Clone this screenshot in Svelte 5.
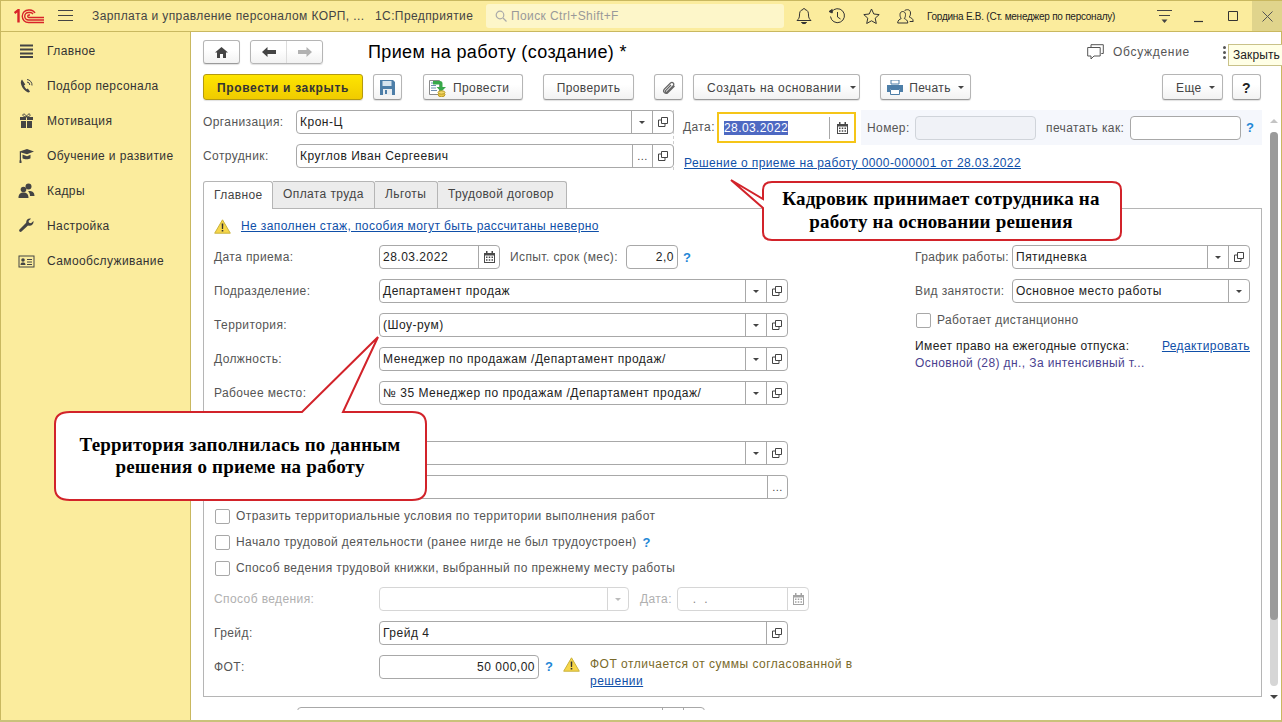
<script>
  const menu = [
    ['Главное', 'list'], ['Подбор персонала', 'phone'], ['Мотивация', 'gift'],
    ['Обучение и развитие', 'cap'], ['Кадры', 'people'], ['Настройка', 'wrench'], ['Самообслуживание', 'card']
  ];
  const tabs = ['Главное', 'Оплата труда', 'Льготы', 'Трудовой договор'];
</script>

{#snippet copyIcon()}
  <svg class="ic" width="12" height="12" viewBox="0 0 12 12"><path d="M4.500 1.500h6v6h-6z M4 4H1.500v6.500H8V8" fill="none" stroke="#444" stroke-width="1"/></svg>
{/snippet}
{#snippet calIcon()}
  <svg class="ic" width="11" height="12" viewBox="0 0 11 12"><path d="M0 2h11v10H0z" fill="#4a4a4a"/><path d="M2 0h1.500v3H2zM7.500 0H9v3H7.500z" fill="#4a4a4a"/><path d="M1 4.500h9V11H1z" fill="#fff"/><path d="M2 5.500h1.500v1.500H2zM4.750 5.500h1.500v1.500h-1.500zM7.500 5.500H9v1.500H7.500zM2 8.300h1.500v1.500H2zM4.750 8.300h1.500v1.500h-1.500zM7.500 8.300H9v1.500H7.500z" fill="#4a4a4a"/></svg>
{/snippet}
{#snippet warnIcon()}
  <svg width="17" height="15" viewBox="0 0 17 15"><path d="M8.500 .8 16.300 14.200H.7z" fill="#f6d64a" stroke="#c9b23a" stroke-width="1" stroke-linejoin="round"/><path d="M7.700 4.500h1.600l-.2 5.500H7.900zM7.700 11h1.600v1.600H7.700z" fill="#333"/></svg>
{/snippet}
{#snippet field(value, cls, pick, open, dots)}
  <div class="field {cls}">
    <span class="val">{value}</span>
    {#if pick}<span class="fbtn"><i class="tri"></i></span>{/if}
    {#if dots}<span class="fbtn dots">...</span>{/if}
    {#if open}<span class="fbtn open">{@render copyIcon()}</span>{/if}
  </div>
{/snippet}

<div class="app">
  <header class="top">
    <svg class="logo" width="30" height="15" viewBox="0 0 30 15" fill="none" stroke="#d8232a" stroke-width="1.400">
      <path d="M.5 4 4.500 1V13.500" stroke-width="2.400"/>
      <path d="M30 13.500H14.500a6 6 0 0 1 0-12.500H16a6 6 0 0 1 5 3"/>
      <path d="M30 11H14.500a3.500 3.500 0 0 1 0-7.500H16a3.500 3.500 0 0 1 3 1.500"/>
      <path d="M30 8.500H15a1 1 0 0 1 0-2.500h1"/>
    </svg>
    <svg class="burger" width="15" height="12" viewBox="0 0 15 12"><path d="M0 .5h15M0 5.500h15M0 10.500h15" stroke="#444"/></svg>
    <span class="app-title">Зарплата и управление персоналом КОРП, ...</span>
    <span class="app-name">1С:Предприятие</span>
    <div class="search">
      <svg width="12" height="12" viewBox="0 0 12 12" fill="none" stroke="#aaa" stroke-width="1.200"><circle cx="5" cy="5" r="3.800"/><path d="m8 8 3.500 3.500"/></svg>
      <span>Поиск Ctrl+Shift+F</span>
    </div>
    <svg class="t-ic bell" width="16" height="18" viewBox="0 0 16 18" fill="none" stroke="#333"><path d="M8 1.500a1 1 0 0 1 1 1c3 .7 3.500 3 3.500 5.500 0 3 1 4 2.500 5.500H1C2.500 12 3.500 11 3.500 8c0-2.500.5-4.800 3.500-5.500a1 1 0 0 1 1-1z"/><path d="M5.500 15.500h5c-.5 1.500-4.500 1.500-5 0z" fill="#333"/></svg>
    <svg class="t-ic hist" width="17" height="17" viewBox="0 0 17 17" fill="none" stroke="#333"><path d="M2.500 4A7 7 0 1 1 1.500 8.500"/><path d="M0 3.500 3.200 1.500V5z" fill="#333"/><path d="M8.500 4v5l3 2"/></svg>
    <svg class="t-ic star" width="17" height="16" viewBox="0 0 17 16" fill="none" stroke="#333"><path d="m8.500 1 2.300 5 5.400.6-4 3.600 1.100 5.300-4.800-2.700-4.800 2.700 1.100-5.300-4-3.600L6.200 6z"/></svg>
    <svg class="t-ic users" width="17" height="15" viewBox="0 0 17 15" fill="none" stroke="#333"><path d="M.7 14c0-3 2-3.500 3.500-4.500C3 8 3 6.500 3 5.500 3 3.500 4.300 2.500 5.700 2.500S8.500 3.500 8.500 5.500c0 1 0 2.500-1.200 4 1.500 1 3.500 1.500 3.500 4.500z"/><path d="M7.500 2C8 1 9.200.7 10.500.7c1.800 0 3 1.200 3 3.300 0 1.500-.3 3-1.300 4 1.500.8 4 1.200 4 4.500h-3.500"/></svg>
    <span class="user">Гордина Е.В. (Ст. менеджер по персоналу)</span>
    <svg class="t-ic more" width="15" height="13" viewBox="0 0 15 13"><path d="M0 .5h15M2 5.500h11" stroke="#444"/><path d="m4.500 9.500h6L7.500 13z" fill="#444"/></svg>
    <svg class="t-ic minw" width="9" height="3" viewBox="0 0 9 3"><path d="M0 1.500h9" stroke="#333" stroke-width="1.200"/></svg>
    <svg class="t-ic maxw" width="10" height="10" viewBox="0 0 10 10"><path d="M.5.500h9v9h-9z" fill="none" stroke="#333"/></svg>
    <div class="closew"><svg width="11" height="11" viewBox="0 0 11 11"><path d="m.5.500 10 10m0-10-10 10" stroke="#555"/></svg></div>
  </header>

  <div class="body">
    <nav class="side">
      {#each menu as [label, icon]}
        <div class="mi">
          <svg class="mi-ic" width="17" height="16" viewBox="0 0 17 16" fill="#444">
            {#if icon === 'list'}
              <path d="M2 1.500h13v2H2zM2 5.500h13v2H2zM2 9.500h13v2H2zM2 13h13v2H2z" />
            {:else if icon === 'phone'}
              <path d="M4 1.500C2.500 3 2.500 5 3.500 7.500 4.700 10.500 7 13 9.500 14.300c1 .4 1.700 0 2.500-.8L9.800 10.500l-1.300.8C7.300 10 6.500 8.800 6 7.400l1.300-1z" /><path d="M9 1.500a5.500 5.500 0 0 1 5 6M9 4a3 3 0 0 1 2.800 3" fill="none" stroke="#444" />
            {:else if icon === 'gift'}
              <path d="M2 4h6v3H2zM9 4h6v3H9zM3 8h5v7H3zM9 8h5v7H9z" /><path d="M8.500 4C6 4 4.500 3 5 1.500 5.700.2 8 1.500 8.500 4 9 1.500 11.300.2 12 1.500 12.500 3 11 4 8.500 4z" fill="none" stroke="#444" />
            {:else if icon === 'cap'}
              <path d="M1.500 3.500 9 1l7 2.500-7 2.800L3 4.500V13H1.800V3.800z" /><path d="M4.500 6.500 9 8.200l3.500-1.500v3.500c-2 1.500-6 1.500-8 0zM1.500 12.500h2V15h-2z" />
            {:else if icon === 'people'}
              <circle cx="10.500" cy="3.500" r="3" /><circle cx="5.500" cy="6.500" r="2.800" /><path d="M.5 15c0-4 2-5.500 5-5.500s5 1.500 5 5.500zM11 8c3 0 5.500 1 5.500 5H12c0-2-.5-3.500-2-4.500z" />
            {:else if icon === 'wrench'}
              <path d="M15.500 3 13 5.300 11 4.800 10.500 3 13 .7c-2.500-.8-5 1-4.800 4L1.500 11.500c-1.200 1.300.7 3.300 2 2L10 7.500c3.500 1 6-1.500 5.500-4.500z" />
            {:else}
              <path d="M.5 2.500h16v12H.5z M1.500 3.500v10h14v-10z" fill-rule="evenodd" /><circle cx="5" cy="7" r="1.800" /><path d="M2.500 12c0-2 1-2.500 2.500-2.500s2.500.5 2.500 2.500zM9 6h5v1H9zM9 8.500h5v1H9zM9 11h5v1H9z" />
            {/if}
          </svg>
          <span>{label}</span>
        </div>
      {/each}
    </nav>

    <main class="main">
      <div class="r-title">
        <button class="btn home"><svg width="13" height="11" viewBox="0 0 13 11" fill="#444"><path d="M6.500 0 13 5.500h-2V11H8V7H5v4H2V5.500H0z"/></svg></button>
        <div class="navgrp">
          <span class="nb"><svg width="14" height="10" viewBox="0 0 14 10" fill="#444"><path d="M5.500 0v3H14v4H5.500v3L0 5z"/></svg></span>
          <span class="nb"><svg width="14" height="10" viewBox="0 0 14 10" fill="#b2b2b2"><path d="M8.500 0v3H0v4h8.500v3L14 5z"/></svg></span>
        </div>
        <h1>Прием на работу (создание) *</h1>
        <svg class="chat" width="17" height="16" viewBox="0 0 17 16" fill="none" stroke="#555"><path d="M4 3V.7h12.300V9.500h-2"/><path d="M.7 3.500h12.500v8.500H7L4 15v-3H.7z" fill="#fff"/></svg>
        <span class="disc">Обсуждение</span>
        <span class="vdots"><i></i><i></i><i></i></span>
      </div>

      <div class="r-tools">
        <button class="btn primary">Провести и закрыть</button>
        <button class="btn b-save"><svg width="15" height="15" viewBox="0 0 15 15"><path d="M0 0h13l2 2v13H0z" fill="#4d7ea8"/><path d="M2.500 1h9v5h-9z" fill="#d7e4ee"/><path d="M3 9h9v6H3z" fill="#e8edf1"/><path d="M5 10h2v4H5z" fill="#4d7ea8"/></svg></button>
        <button class="btn b-post"><svg width="17" height="18" viewBox="0 0 17 18"><path d="M.5 1.500h10v14H.5z" fill="#fff" stroke="#8a8a8a"/><path d="M2 4h6M2 6.500h5M2 9h5M2 11.500h6" stroke="#6f8fb0"/><path d="M4 2h7a2.500 2.500 0 0 1 2.500 2.500V8H17l-4.800 4.800L7.500 8H11V5.500H4z" fill="#38a84a"/><ellipse cx="12.500" cy="15.500" rx="3.500" ry="2.300" fill="#ecc94a" stroke="#b99a2a"/><ellipse cx="12.500" cy="13.500" rx="3.500" ry="1.700" fill="#f4d968" stroke="#b99a2a"/></svg>Провести</button>
        <button class="btn b-check">Проверить</button>
        <button class="btn b-clip"><svg width="14" height="14" viewBox="0 0 14 14" fill="none" stroke="#666" stroke-width="1.200"><path d="M12.500 5 6 11.500c-2.500 2.500-6-1-3.500-3.500l6-6c2-1.700 4.300.7 2.700 2.700L5 11c-1 .8-2.200-.4-1.400-1.400L9 4"/></svg></button>
        <button class="btn b-create">Создать на основании<i class="tri"></i></button>
        <button class="btn b-print"><svg width="16" height="15" viewBox="0 0 16 15"><path d="M4 0h8v4H4z" fill="#fff" stroke="#4d7ea8"/><path d="M0 5h16v7h-3V9H3v3H0z" fill="#4d7ea8"/><path d="M3.500 9.500h9v5h-9z" fill="#fff" stroke="#4d7ea8"/></svg>Печать<i class="tri"></i></button>
        <span class="grow"></span>
        <button class="btn b-more">Еще<i class="tri"></i></button>
        <button class="btn b-help">?</button>
      </div>

      <div class="head">
        <div class="head-l">
          <div class="row"><label>Организация:</label>{@render field('Крон-Ц', 'w-org', true, true, false)}</div>
          <div class="row"><label>Сотрудник:</label>{@render field('Круглов Иван Сергеевич', 'w-org', false, true, true)}</div>
        </div>
        <div class="head-r">
          <div class="head-top">
            <label class="dl">Дата:</label>
            <div class="datef"><span class="sel">28.03.2022</span><span class="fbtn open">{@render calIcon()}</span></div>
            <div class="nopanel">
              <label>Номер:</label>
              <div class="field w-num disabled"></div>
              <label class="pk">печатать как:</label>
              <div class="field w-pk"></div>
              <span class="q">?</span>
            </div>
          </div>
          <a class="lnk decision">Решение о приеме на работу 0000-000001 от 28.03.2022</a>
        </div>
      </div>

      <div class="tabs">
        {#each tabs as t, i}<span class="tab" class:on={i === 0}>{t}</span>{/each}
      </div>
      <section class="panel">
        <div class="warn">{@render warnIcon()}<a class="lnk">Не заполнен стаж, пособия могут быть рассчитаны неверно</a></div>
        <div class="cols">
          <div class="col-l">
            <div class="frow">
              <label>Дата приема:</label>
              <div class="field w-date"><span class="val">28.03.2022</span><span class="fbtn open">{@render calIcon()}</span></div>
              <label class="trial">Испыт. срок (мес):</label>
              <div class="field w-trial"><span class="val right">2,0</span></div>
              <span class="q">?</span>
            </div>
            <div class="frow"><label>Подразделение:</label>{@render field('Департамент продаж', 'w-main', true, true, false)}</div>
            <div class="frow"><label>Территория:</label>{@render field('(Шоу-рум)', 'w-main', true, true, false)}</div>
            <div class="frow"><label>Должность:</label>{@render field('Менеджер по продажам /Департамент продаж/', 'w-main', true, true, false)}</div>
            <div class="frow"><label>Рабочее место:</label>{@render field('№ 35 Менеджер по продажам /Департамент продаж/', 'w-main', true, true, false)}</div>
            <div class="frow gap-t"><label></label>{@render field('', 'w-main', true, true, false)}</div>
            <div class="frow"><label></label>{@render field('', 'w-main', false, false, true)}</div>
            <div class="chk c1"><i class="box"></i>Отразить территориальные условия по территории выполнения работ</div>
            <div class="chk"><i class="box"></i>Начало трудовой деятельности (ранее нигде не был трудоустроен)<span class="q q2">?</span></div>
            <div class="chk"><i class="box"></i>Способ ведения трудовой книжки, выбранный по прежнему месту работы</div>
            <div class="frow dis r-way">
              <label>Способ ведения:</label>
              <div class="field w-way disabled2"><span class="val"></span><span class="fbtn"><i class="tri"></i></span></div>
              <label class="wd">Дата:</label>
              <div class="field w-wd disabled2"><span class="val">&nbsp;&nbsp;.&nbsp;&nbsp;.</span><span class="fbtn open">{@render calIcon()}</span></div>
            </div>
            <div class="frow"><label>Грейд:</label>{@render field('Грейд 4', 'w-main', false, true, false)}</div>
            <div class="frow fot">
              <label>ФОТ:</label>
              <div class="field w-fot"><span class="val right">50 000,00</span></div>
              <span class="q q3">?</span>
              {@render warnIcon()}
              <p class="fotmsg">ФОТ отличается от суммы согласованной в <a class="lnk">решении</a></p>
            </div>
          </div>
          <div class="col-r">
            <div class="frow"><label class="rl">График работы:</label>{@render field('Пятидневка', 'w-right', true, true, false)}</div>
            <div class="frow"><label class="rl">Вид занятости:</label>{@render field('Основное место работы', 'w-right', true, false, false)}</div>
            <div class="chk c-r"><i class="box"></i>Работает дистанционно</div>
            <div class="vac">
              <div class="vac-h"><span>Имеет право на ежегодные отпуска:</span><a class="lnk">Редактировать</a></div>
              <div class="vac-v">Основной (28) дн., За интенсивный т...</div>
            </div>
          </div>
        </div>
      </section>
      <div class="clipped"><div class="clip-f"><i></i><i></i></div></div>
    </main>

    <div class="sbar"><i class="arr"></i><div class="track"><i class="thumb"></i></div><i class="arr dn"></i></div>
  </div>

  <div class="tip">Закрыть</div>

  <svg class="callouts" width="1282" height="722" viewBox="0 0 1282 722">
    <path class="co" d="M731 180 763 199V190Q763 182 772 182H1112Q1121 182 1121 190V232Q1121 240 1112 240H772Q763 240 763 232V208z"/>
    <path class="co" d="M378 337 302 412H70Q55 412 55 424V488Q55 500 70 500H412Q426 500 426 488V424Q426 412 412 412H343z"/>
    <text class="ct" x="941" y="205">Кадровик принимает сотрудника на</text>
    <text class="ct" x="941" y="228">работу на основании решения</text>
    <text class="ct" x="240" y="451">Территория заполнилась по данным</text>
    <text class="ct" x="240" y="473">решения о приеме на работу</text>
  </svg>
</div>

<style>
  :global(body) { margin: 0; background: #fff; }
  .app { position: relative; width: 1282px; height: 722px; overflow: hidden; font: 12px "Liberation Sans", Arial, sans-serif; letter-spacing: .4px; color: #333; display: flex; flex-direction: column; }
  .top { flex: none; background: #fbec9d; border-top: 1px solid #c9b860; border-bottom: 1px solid #c9b860; border-left: 1px solid #c9b860; display: flex; align-items: center; height: 30px; }
  .logo { margin-left: 13px; flex: none; }
  .burger { margin-left: 14px; flex: none; }
  .app-title { margin-left: 19px; width: 283px; white-space: nowrap; color: #444; flex: none; }
  .app-name { color: #444; width: 111px; flex: none; white-space: nowrap; }
  .search { width: 298px; height: 24px; background: #fdf6c9; border-radius: 3px; display: flex; align-items: center; gap: 4px; padding-left: 9px; box-sizing: border-box; color: #999; flex: none; }
  .t-ic { flex: none; }
  .bell { margin-left: 12px; }
  .hist { margin-left: 17px; }
  .star { margin-left: 17px; }
  .users { margin-left: 17px; }
  .user { margin-left: 13px; width: 225px; font-size: 10px; letter-spacing: -.25px; white-space: nowrap; color: #222; flex: none; }
  .more { margin-left: 5px; }
  .minw { margin-left: 22px; margin-top: 10px; }
  .maxw { margin-left: 25px; }
  .closew { margin-left: 14px; width: 31px; height: 30px; background: #e0d48c; display: flex; align-items: center; justify-content: center; flex: none; }

  .body { flex: 1; display: flex; min-height: 0; border-bottom: 2px solid #c9c27a; border-right: 1px solid #c9b860; }
  .side { flex: none; background: #fbec9d; border-left: 1px solid #c9b860; border-right: 1px solid #c9b860; padding-top: 1px; width: 189px; }
  .mi { height: 35px; display: flex; align-items: center; padding-left: 17px; color: #333; }
  .mi-ic { flex: none; margin-right: 12px; }

  .main { flex: 1; min-width: 0; padding: 8px 0 0 12px; overflow: hidden; }
  .sbar { width: 19px; flex: none; display: flex; flex-direction: column; align-items: flex-start; padding: 87px 0 0 8px; box-sizing: border-box; }
  .arr { width: 0; height: 0; border: 4px solid transparent; border-bottom: 4px solid #c4c4c4; border-top: 0; margin-bottom: 9px; }
  .arr.dn { border-bottom: 0; border-top: 4px solid #444; margin: 9px 0 0; }
  .track { width: 8px; height: 554px; border-radius: 4px; background: #d6d6d6; flex: none; }
  .thumb { display: block; width: 8px; height: 488px; border-radius: 4px; background: #9a9a9a; }

  button { font: inherit; letter-spacing: inherit; }
  .btn { height: 24px; box-sizing: border-box; border: 1px solid #b5b5b5; border-bottom-color: #9a9a9a; border-radius: 3px; background: linear-gradient(#fff 40%, #f2f2f2); color: #444; display: inline-flex; align-items: center; justify-content: center; padding: 0; flex: none; box-shadow: 0 1px 1px rgba(0,0,0,.12); }
  .tri { display: inline-block; width: 0; height: 0; border: 3px solid transparent; border-top: 3px solid #444; border-bottom: 0; margin-left: 7px; }

  .r-title { height: 24px; display: flex; align-items: center; }
  .home { width: 37px; }
  .navgrp { margin-left: 10px; width: 73px; height: 24px; box-sizing: border-box; border: 1px solid #b5b5b5; border-radius: 3px; display: flex; background: linear-gradient(#fff 40%, #f2f2f2); box-shadow: 0 1px 1px rgba(0,0,0,.12); flex: none; }
  .nb { flex: 1; display: flex; align-items: center; justify-content: center; }
  .nb + .nb { border-left: 1px solid #ddd; }
  h1 { margin: 0 0 0 45px; font: 400 18px "Liberation Sans", Arial, sans-serif; letter-spacing: .35px; color: #000; width: 720px; white-space: nowrap; flex: none; }
  .chat { margin-left: -1px; flex: none; }
  .disc { margin-left: 9px; color: #555; width: 110px; flex: none; letter-spacing: .7px; }
  .vdots { display: flex; flex-direction: column; gap: 2px; }
  .vdots i { width: 3px; height: 3px; border-radius: 50%; background: #555; }

  .r-tools { margin-top: 10px; height: 26px; display: flex; align-items: stretch; padding-right: 1px; }
  .r-tools .btn { height: 26px; padding-top: 1px; }
  .primary { width: 160px; background: linear-gradient(#fee500, #f0cb00); border-color: #b49a10; font-weight: 700; color: #333; letter-spacing: .65px; }
  .b-save { width: 29px; margin-left: 10px; }
  .b-post { width: 100px; margin-left: 21px; gap: 7px; justify-content: flex-start; padding-left: 5px; }
  .b-check { width: 91px; margin-left: 20px; }
  .b-clip { width: 29px; margin-left: 20px; }
  .b-create { width: 167px; margin-left: 10px; justify-content: flex-start; padding-left: 13px; letter-spacing: .5px; }
  .b-create .tri { margin-left: 8px; }
  .b-print { width: 91px; margin-left: 20px; gap: 6px; }
  .b-print .tri { margin-left: 1px; }
  .grow { flex: 1; }
  .b-more { width: 61px; justify-content: flex-start; padding-left: 13px; }
  .b-help { width: 29px; margin-left: 9px; font-weight: 700; font-size: 14px; color: #222; }

  .head { margin-top: 10px; display: flex; height: 58px; }
  .head-l { width: 471px; flex: none; border-right: 1px dashed #ccc; box-sizing: border-box; height: 60px; }
  .row { height: 24px; display: flex; align-items: center; margin-bottom: 10px; }
  .row label { width: 93px; color: #555; flex: none; }
  .head-r { padding-left: 9px; flex: 1; min-width: 0; }
  .head-top { display: flex; height: 35px; align-items: flex-start; }
  .dl { width: 34px; margin-top: 10px; color: #555; flex: none; }
  .datef { width: 139px; height: 31px; margin-top: 2px; box-sizing: border-box; border: 2px solid #f5c518; display: flex; align-items: center; flex: none; }
  .sel { background: #4e69c2; color: #fff; white-space: nowrap; height: 14px; line-height: 14px; }
  .datef .sel { margin-left: 5px; flex: none; width: 64px; margin-right: auto; }
  .datef .fbtn { height: 22px; width: 24px; }
  .nopanel { flex: 1; height: 35px; margin-left: 5px; background: #f5f7fc; display: flex; align-items: center; padding-left: 6px; }
  .nopanel label { color: #555; width: 48px; flex: none; }
  .nopanel label.pk { width: 84px; margin-left: 10px; white-space: nowrap; }
  .lnk { color: #0f4fa8; text-decoration: underline; }
  .decision { display: block; margin: 11px 0 0 1px; white-space: nowrap; }

  .field { height: 24px; box-sizing: border-box; border: 1px solid #a8a8a8; border-radius: 4px; background: #fff; display: flex; align-items: stretch; flex: none; color: #222; }
  .val { flex: 1; min-width: 0; padding-left: 3px; line-height: 22px; white-space: nowrap; overflow: hidden; letter-spacing: .5px; }
  .val.right { text-align: right; padding-right: 3px; }
  .fbtn { width: 20px; flex: none; border-left: 1px solid #a8a8a8; display: flex; align-items: center; justify-content: center; }
  .fbtn .tri { margin: 0; }
  .fbtn.dots { align-items: flex-end; padding-bottom: 5px; box-sizing: border-box; line-height: 1; color: #444; font-size: 11px; }
  .ic { display: block; }
  .w-org { width: 378px; }
  .w-num { width: 121px; }
  .w-pk { width: 111px; }
  .disabled { background: #f0f2f7; border-color: #d0d4da; }
  .q { color: #1f87d6; font-weight: 700; margin-left: 5px; font-size: 13px; }
  .w-date { width: 121px; }
  .w-trial { width: 52px; }
  .w-main { width: 409px; }
  .w-right { width: 238px; }
  .w-way { width: 250px; }
  .w-wd { width: 132px; }
  .w-fot { width: 160px; }

  .tabs { margin-top: 12px; height: 28px; display: flex; align-items: flex-end; }
  .tab { height: 27px; box-sizing: border-box; padding: 0 10px; line-height: 25px; background: #ececec; border: 1px solid #b5b5b5; border-bottom: 0; border-left: 0; color: #444; border-radius: 0 3px 0 0; white-space: nowrap; }
  .tab:nth-child(2) { width: 102px; }
  .tab:nth-child(3) { width: 63px; }
  .tab:nth-child(4) { width: 129px; }
  .tab.on { height: 28px; background: #fff; border-left: 1px solid #b5b5b5; border-radius: 3px 3px 0 0; width: 70px; padding-left: 10px; margin-bottom: -1px; position: relative; line-height: 26px; }
  .panel { width: 1059px; height: 489px; box-sizing: border-box; border: 1px solid #b5b5b5; padding: 9px 0 0 10px; }
  .warn { height: 16px; display: flex; align-items: center; gap: 10px; }
  .cols { display: flex; margin-top: 11px; }
  .col-l { width: 701px; flex: none; }
  .frow { display: flex; align-items: center; height: 24px; margin-bottom: 10px; color: #555; }
  .frow > label { width: 165px; flex: none; white-space: nowrap; }
  .frow > label.trial { width: 116px; margin-left: 10px; }
  .frow.gap-t { margin-top: 36px; }
  .frow .rl { width: 97px; }
  .chk { height: 14px; display: flex; align-items: center; margin-bottom: 12px; color: #555; white-space: nowrap; padding-left: 1px; }
  .chk.c1 { margin-top: 2px; }
  .box { width: 13px; height: 13px; border: 1px solid #a8a8a8; border-radius: 2px; background: #fff; margin-right: 6px; flex: none; }
  .q2 { margin-left: 6px; }
  .dis { color: #b0b0b0; }
  .r-way { margin-top: 4px; }
  .disabled2 { border-color: #d6d6d6; color: #aaa; }
  .disabled2 .fbtn { border-color: #d6d6d6; }
  .disabled2 .tri { border-top-color: #bbb; }
  .disabled2 .ic { opacity: .5; }
  .frow > label.wd { width: 37px; margin-left: 11px; }
  .r-way .w-wd .val { padding-left: 7px; color: #888; }
  .fot { align-items: flex-start; }
  .fot label { line-height: 24px; }
  .q3 { margin-left: 6px; line-height: 24px; width: 18px; }
  .fot svg { margin-top: 2px; flex: none; }
  .fotmsg { margin: 1px 0 0 10px; width: 275px; color: #7a6a2a; line-height: 17px; letter-spacing: .5px; }
  .col-r { flex: none; }
  .c-r { margin-top: 2px; margin-bottom: 12px; }
  .vac-h { display: flex; justify-content: space-between; color: #222; width: 335px; white-space: nowrap; }
  .vac-v { color: #4a3f8f; margin-top: 3px; white-space: nowrap; }
  .clipped { height: 3px; margin: 10px 0 0 94px; overflow: hidden; width: 408px; }
  .clip-f { height: 24px; box-sizing: border-box; border: 1px solid #a8a8a8; border-radius: 4px; display: flex; justify-content: flex-end; }
  .clip-f i { width: 20px; border-left: 1px solid #a8a8a8; }

  .tip { position: absolute; left: 1228px; top: 44px; width: 54px; height: 22px; box-sizing: border-box; background: #ffffe6; border: 1px solid #c9c28a; border-right: 0; color: #222; line-height: 21px; padding-left: 4px; white-space: nowrap; letter-spacing: .1px; }
  .callouts { position: absolute; left: 0; top: 0; pointer-events: none; }
  .co { fill: #fff; stroke: #d2232a; stroke-width: 2; }
  .ct { font: 700 19px "Liberation Serif", "Times New Roman", serif; letter-spacing: .2px; fill: #000; text-anchor: middle; }
</style>
